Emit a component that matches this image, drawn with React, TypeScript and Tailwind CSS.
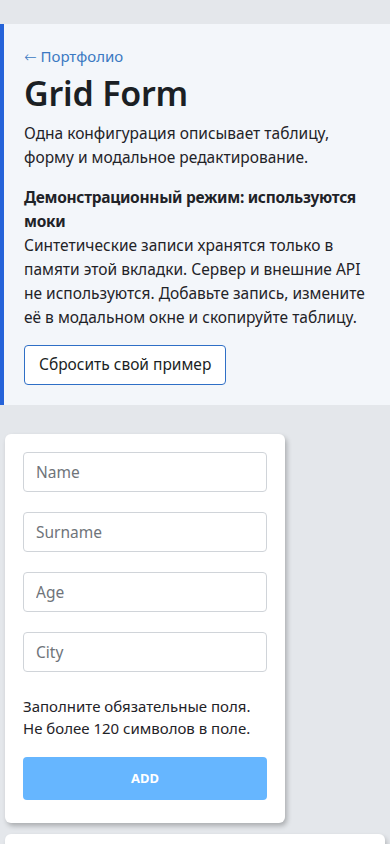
import React from 'react';

const fields = ['Name', 'Surname', 'Age', 'City'];

const App: React.FC = () => {
  return (
    <div className="min-h-[844px] bg-[#e4e7eb] pt-6 pb-4 font-['Noto_Sans',sans-serif] text-[#1f2328]">
      {/* Hero */}
      <section className="border-l-4 border-[#2563d9] bg-[#f3f6fa] pl-5 pr-4 pt-5 pb-5">
        <a className="block text-[15px] leading-6 text-[#3b79c2]">
          <span className="font-['DejaVu_Sans',sans-serif] font-light">←</span> Портфолио
        </a>
        <h1 className="mt-[2px] text-[34px] font-semibold leading-[44px] tracking-[-0.2px] text-[#1b1f24]">Grid Form</h1>
        <p className="mt-[6px] text-[15.5px] leading-6">
          Одна конфигурация описывает таблицу, <br />форму и модальное редактирование.
        </p>
        <div className="mt-4 text-[15.5px] leading-6">
          <p className="font-bold tracking-[-0.3px]">Демонстрационный режим: используются моки</p>
          <p>
            Синтетические записи хранятся только в памяти этой вкладки. Сервер и внешние API не
            используются. Добавьте запись, измените её в модальном окне и скопируйте таблицу.
          </p>
        </div>
        <button className="mt-4 h-10 rounded border border-[#2f6fc6] bg-white px-[14px] text-[15.5px] text-[#1b1f24]">
          Сбросить свой пример
        </button>
      </section>

      {/* Form card */}
      <div className="mt-[29px] px-[5px]">
        <div className="w-[280px] rounded-md bg-white px-[18px] pt-[18px] pb-[23px] shadow-[2px_3px_5px_rgba(0,0,0,0.25)]">
          <div className="flex flex-col gap-5">
            {fields.map((f) => (
              <input
                key={f}
                placeholder={f}
                className="h-10 w-full rounded border border-[#d0d4d9] px-3 text-[15.5px] text-[#1f2328] placeholder:text-[#6f747a] outline-none"
              />
            ))}
          </div>
          <p className="mt-[23px] text-[15px] leading-[22px] text-[#1f2328]">
            Заполните обязательные поля.
            <br />
            Не более 120 символов в поле.
          </p>
          <button className="mt-[18px] h-[43px] w-full rounded bg-[#66b6ff] text-[13px] font-bold text-white">ADD</button>
        </div>

        <div className="mt-[11px] h-10 rounded-md bg-white shadow-[2px_3px_5px_rgba(0,0,0,0.2)]" />
      </div>
    </div>
  );
};

export default App;
